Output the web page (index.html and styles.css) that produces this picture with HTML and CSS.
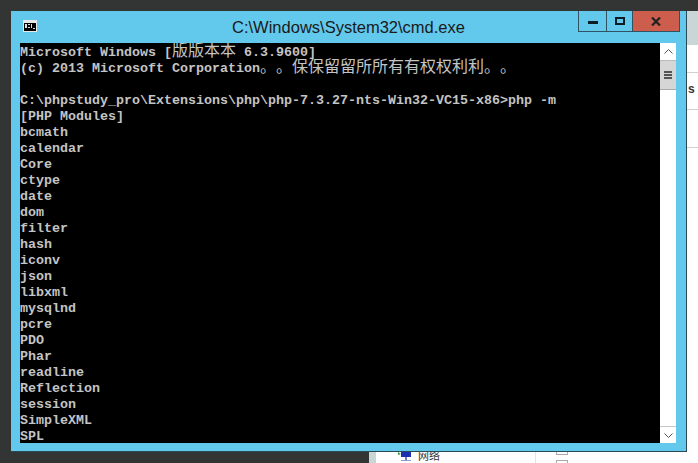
FILE: index.html
```html
<!DOCTYPE html>
<html lang="zh">
<head>
<meta charset="utf-8">
<title>cmd.exe</title>
<link rel="stylesheet" href="styles.css">
</head>
<body>
<div class="desktop">
  <div class="back-window">
    <div class="back-head"></div>
    <div class="back-row back-row-s"><span class="back-s">s</span></div>
    <div class="back-row"></div>
    <div class="back-foot">
      <svg class="net-icon" width="14" height="13" viewBox="0 0 14 13"><path d="M0 2l3 2-3 1z" fill="#3f9a4a"/><rect x="3" y="0" width="10" height="7" fill="#1c2fb0"/><rect x="7" y="7" width="2" height="3" fill="#6a7bb8"/><rect x="3" y="10" width="10" height="1" fill="#8c9bd0"/></svg>
      <span class="net-label">网络</span>
      <span class="back-divider"></span>
      <span class="back-check"></span>
      <span class="back-check back-check-next"></span>
    </div>
  </div>
  <div class="cmd-window">
    <div class="titlebar">
      <svg class="app-icon" width="14" height="12" viewBox="0 0 14 12"><rect width="14" height="12" fill="#e8e8e8"/><rect y="3" x="1" width="12" height="8" fill="#000"/><rect x="2" y="4" width="2" height="4" fill="#ddd"/><rect x="5" y="4" width="2" height="1" fill="#ddd"/><rect x="5" y="7" width="2" height="1" fill="#ddd"/><rect x="8" y="4" width="1" height="4" fill="#ddd"/><rect x="10" y="8" width="2" height="1" fill="#ddd"/></svg>
      <div class="title">C:\Windows\System32\cmd.exe</div>
      <div class="controls">
        <div class="ctrl ctrl-min"><span class="glyph-min"></span></div>
        <div class="ctrl ctrl-max"><span class="glyph-max"></span></div>
        <div class="ctrl ctrl-close"><svg width="10" height="9" viewBox="0 0 10 9"><path d="M1 .5l8 8M9 .5l-8 8" stroke="#222" stroke-width="2.2" fill="none"/></svg></div>
      </div>
    </div>
    <div class="content">
<pre class="console">Microsoft Windows [<span class="cjk">版版本本</span> 6.3.9600]
(c) 2013 Microsoft Corporation<span class="cjk">。。保保留留所所有有权权利利。。</span>

C:\phpstudy_pro\Extensions\php\php-7.3.27-nts-Win32-VC15-x86&gt;php -m
[PHP Modules]
bcmath
calendar
Core
ctype
date
dom
filter
hash
iconv
json
libxml
mysqlnd
pcre
PDO
Phar
readline
Reflection
session
SimpleXML
SPL</pre>
      <div class="scrollbar">
        <div class="arrow"><svg width="9" height="5" viewBox="0 0 9 5"><path d="M.5 4.5l4-4 4 4" stroke="#555" fill="none"/></svg></div>
        <div class="thumb"><span></span><span></span><span></span></div>
        <div class="track"></div>
        <div class="arrow arrow-down"><svg width="9" height="5" viewBox="0 0 9 5"><path d="M.5 .5l4 4 4-4" stroke="#555" fill="none"/></svg></div>
      </div>
    </div>
  </div>
</div>
</body>
</html>
```
FILE: styles.css
```css
* { box-sizing: border-box; }
html, body { margin: 0; padding: 0; }
body { width: 698px; height: 463px; overflow: hidden; background: #333534; }
.desktop { position: relative; width: 698px; height: 463px; overflow: hidden; }
.back-window {
  position: absolute; left: 369px; top: 11px; width: 329px; height: 452px;
  background: #fff; border-left: 7px solid #c9d6d8;
  display: flex; flex-direction: column;
}
.back-head { height: 34px; background: #c9d6d8; }
.back-row { height: 38px; border-bottom: 1px solid #d0d0d0; position: relative; }
.back-row-s { margin-top: 27px; height: 38px; border-top: 1px solid #d0d0d0; }
.back-s { position: absolute; left: 312px; top: 9px; font: bold 12px "Liberation Sans", sans-serif; color: #333; }
.back-foot { margin-top: auto; height: 11px; position: relative; font: 11px "Noto Sans CJK SC", sans-serif; color: #333; }
.net-icon { position: absolute; left: 22px; top: -2px; }
.net-label { position: absolute; left: 42px; top: -4px; line-height: 14px; }
.back-divider { position: absolute; left: 159px; top: 0; width: 1px; height: 11px; background: #e4e4e4; }
.back-check { position: absolute; left: 180px; top: -6px; width: 12px; height: 9px; border: 1px solid #aaa; background: #fff; }
.back-check-next { top: 8px; height: 9px; }
.cmd-window {
  position: absolute; left: 11px; top: 11px; width: 676px; height: 441px;
  background: #62c8ec; display: flex; flex-direction: column;
  border-right: 1px solid #2a4a58; border-bottom: 1px solid #2a4a58;
}
.titlebar { height: 32px; position: relative; display: flex; align-items: center; padding-left: 12px; flex: none; }
.app-icon { flex: none; margin-top: -2px; }
.title {
  position: absolute; left: 0; right: 0; top: 6px; text-align: center;
  font: 16.5px/20px "Liberation Sans", sans-serif; color: #1a1a1a;
}
.controls { position: absolute; top: 0; left: 567px; display: flex; height: 21px; }
.ctrl { height: 21px; border: 1px solid #2f5363; border-top: 0; display: flex; align-items: center; justify-content: center; }
.ctrl-min { width: 29px; }
.ctrl-max { width: 26px; border-left: 0; }
.ctrl-close { width: 47px; border-left: 0; background: #cd5d4c; }
.glyph-min { width: 10px; height: 3px; background: #0c1d26; margin-top: 3px; }
.glyph-max { width: 10px; height: 8px; border: 2px solid #0c1d26; }
.content { display: flex; margin-left: 9px; height: 400px; flex: none; }
.console {
  margin: 0; width: 640px; height: 400px; overflow: hidden; background: #000; color: #c4c4c4;
  font: bold 13.33px/16px "Liberation Mono", "Noto Sans CJK SC", monospace;
  white-space: pre; padding-top: 2px;
}
.cjk { font: 400 16px/0 "Noto Sans CJK SC", sans-serif; text-spacing-trim: space-all; font-feature-settings: "palt" 0; }
.scrollbar { width: 16px; background: #fff; display: flex; flex-direction: column; }
.arrow { height: 17px; flex: none; display: flex; align-items: center; justify-content: center; background: #fff; }
.arrow-down { border-top: 1px solid #c4c4c4; }
.thumb { height: 30px; flex: none; background: #d6d6d6; border-top: 1px solid #bbb; border-bottom: 1px solid #aaa; display: flex; flex-direction: column; align-items: center; justify-content: center; gap: 1px; }
.thumb span { width: 8px; height: 2px; background: #555; }
.track { flex: 1; }
```
